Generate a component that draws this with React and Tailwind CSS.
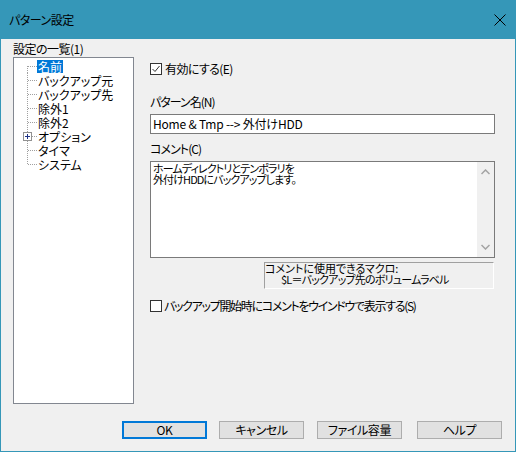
import React from "react";

const FONT = "font-['Noto_Sans_CJK_JP','Noto_Sans_CJK_SC',sans-serif] [font-feature-settings:'palt']";

function TreeRow({ label, first, last, plus, selected }) {
  return (
    <div className="flex items-center h-[14px]">
      <svg width="23" height="14" className="shrink-0" shapeRendering="crispEdges">
        <line x1="13.5" y1={first ? 7 : 0} x2="13.5" y2={last ? 7 : 14} stroke="#a0a0a0" strokeDasharray="1 1" />
        <line x1="14" y1="7.5" x2="23" y2="7.5" stroke="#a0a0a0" strokeDasharray="1 1" />
        {plus && (
          <g>
            <rect x="9.5" y="3.5" width="8" height="8" fill="#fff" stroke="#919191" />
            <line x1="11" y1="7.5" x2="16" y2="7.5" stroke="#1e3287" />
            <line x1="13.5" y1="5" x2="13.5" y2="10" stroke="#1e3287" />
          </g>
        )}
      </svg>
      <span
        className={
          "inline-block h-[13px] leading-[13px] px-[1px] text-[12px] whitespace-nowrap " +
          (selected ? "bg-[#0078d7] text-white" : "text-black")
        }
      >
        {label}
      </span>
    </div>
  );
}

function Check({ checked }) {
  return (
    <div className="w-[12px] h-[12px] border border-[#333333] bg-white flex items-center justify-center shrink-0">
      {checked && (
        <svg width="10" height="10" viewBox="0 0 10 10">
          <path d="M1.5 5 L4 7.5 L8.5 2" fill="none" stroke="#333" strokeWidth="1" />
        </svg>
      )}
    </div>
  );
}

function Btn({ children, primary, className = "" }) {
  return (
    <div
      className={
        "w-[85px] h-[18px] bg-[#e1e1e1] flex items-center justify-center text-[12px] text-black leading-none tracking-[-0.4px] " +
        (primary ? "border-2 border-[#0078d7] " : "border border-[#adadad] ") +
        className
      }
    >
      {children}
    </div>
  );
}

export default function App() {
  const tree = ["名前", "バックアップ元", "バックアップ先", "除外1", "除外2", "オプション", "タイマ", "システム"];
  return (
    <div className={"w-[516px] h-[452px] bg-[#3597b8] flex flex-col " + FONT}>
      <div className="h-[39px] flex items-center justify-between pl-[9px] pr-[10px] shrink-0">
        <span className="text-[12px] text-black tracking-[-0.5px]">パターン設定</span>
        <svg width="12" height="12" viewBox="0 0 12 12">
          <path d="M0.5 0.5 L11.5 11.5 M11.5 0.5 L0.5 11.5" stroke="#000" strokeWidth="1" />
        </svg>
      </div>
      <div className="flex-1 mx-[1px] mb-[1px] bg-[#f0f0f0] pt-[3px] pl-[12px] flex flex-col">
        <div className="flex">
          <div className="w-[121px] flex flex-col shrink-0">
            <div className="h-[15px] leading-[14px] text-[12px] text-black whitespace-nowrap tracking-[-0.5px]">設定の一覧(1)</div>
            <div className="h-[347px] border border-[#828790] bg-white pt-[1px]">
              {tree.map((t, i) => (
                <TreeRow
                  key={t}
                  label={t}
                  first={i === 0}
                  last={i === tree.length - 1}
                  plus={t === "オプション"}
                  selected={i === 0}
                />
              ))}
            </div>
          </div>
          <div className="ml-[16px] w-[345px] flex flex-col">
            <div className="mt-[20px] h-[14px] flex items-center gap-[3px]">
              <Check checked />
              <span className="text-[12px] leading-[14px] text-black tracking-[-0.6px]">有効にする(E)</span>
            </div>
            <div className="mt-[19px] h-[14px] text-[12px] leading-[14px] text-black tracking-[-1px]">パターン名(N)</div>
            <div className="mt-[5px] h-[20px] border border-[#7a7a7a] bg-white flex items-center px-[2px] text-[12px] text-black whitespace-nowrap tracking-[-0.2px]">
              Home &amp; Tmp --&gt; 外付けHDD
            </div>
            <div className="mt-[8px] h-[14px] text-[12px] leading-[14px] text-black tracking-[-0.9px]">コメント(C)</div>
            <div className="mt-[5px] h-[97px] border border-[#7a7a7a] bg-white flex">
              <div className="flex-1 pl-[2px] pt-[1px] text-[11px] leading-[11px] text-black tracking-[-0.9px]">
                <div>ホームディレクトリとテンポラリを</div>
                <div>外付けHDDにバックアップします。</div>
              </div>
              <div className="w-[17px] bg-[#f0f0f0] flex flex-col justify-between items-center py-[7px]">
                <svg width="9" height="6" viewBox="0 0 9 6">
                  <path d="M0.5 5 L4.5 1 L8.5 5" fill="none" stroke="#a3a3a3" strokeWidth="1.5" />
                </svg>
                <svg width="9" height="6" viewBox="0 0 9 6">
                  <path d="M0.5 1 L4.5 5 L8.5 1" fill="none" stroke="#a3a3a3" strokeWidth="1.5" />
                </svg>
              </div>
            </div>
            <div className="mt-[4px] ml-[114px] w-[230px] h-[27px] border-l border-t border-[#a0a0a0] border-r border-r-white border-b border-b-white text-[11px] leading-[11px] text-black">
              <div className="whitespace-nowrap">コメントに使用できるマクロ:</div>
              <div className="pl-[16px] whitespace-nowrap tracking-[-0.8px]">$L＝バックアップ先のボリュームラベル</div>
            </div>
            <div className="mt-[10px] h-[14px] flex items-center gap-[2px]">
              <Check />
              <span className="text-[12px] leading-[14px] text-black whitespace-nowrap tracking-[-1.3px]">
                バックアップ開始時にコメントをウインドウで表示する(S)
              </span>
            </div>
          </div>
        </div>
        <div className="mt-[17px] flex">
          <Btn primary className="ml-[109px]">OK</Btn>
          <Btn className="ml-[12px]">キャンセル</Btn>
          <Btn className="ml-[13px]">ファイル容量</Btn>
          <Btn className="ml-[15px]">ヘルプ</Btn>
        </div>
      </div>
    </div>
  );
}
